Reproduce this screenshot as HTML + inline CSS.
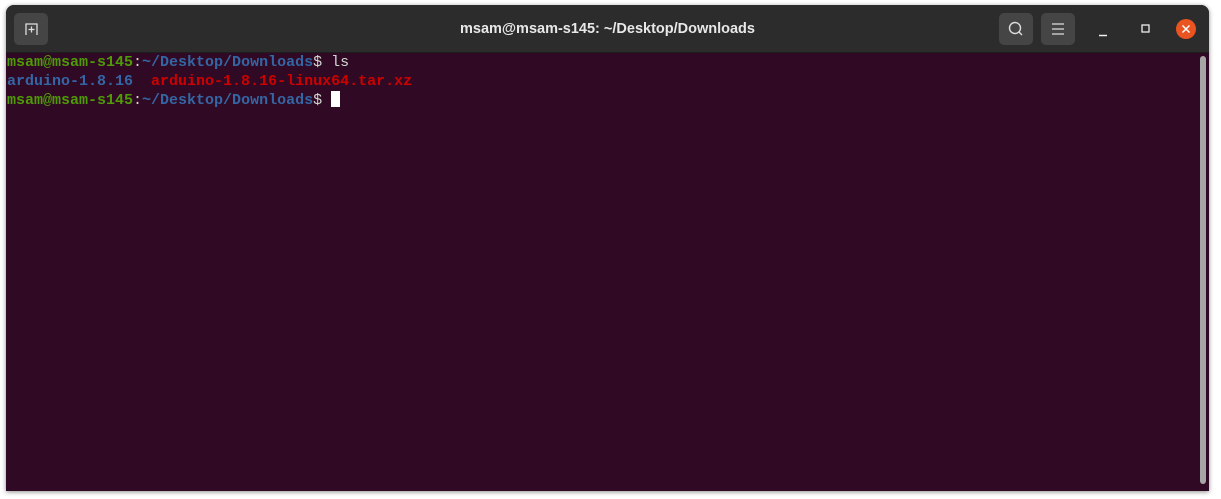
<!DOCTYPE html>
<html><head><style>
html,body{margin:0;padding:0;width:1221px;height:499px;background:#fff;overflow:hidden}
.win{position:absolute;left:6px;top:5px;width:1203px;height:486px;background:#300a24;border-radius:8px 8px 0 0;box-shadow:0 1px 5px rgba(0,0,0,.45);overflow:hidden}
.hdr{position:absolute;left:0;top:0;width:1203px;height:47px;background:#2c2c2c;border-bottom:1px solid #1e1e1e}
.btn{position:absolute;top:8px;width:34px;height:32px;background:#454545;border-radius:5px}
.title{position:absolute;left:0;right:0;top:16px;text-align:center;color:#e8e8e8;font:bold 14.5px "Liberation Sans",sans-serif}
.term{position:absolute;left:1px;top:49px;font:bold 15px/18.5px "Liberation Mono",monospace;white-space:pre;color:#d3d7cf}
.g{color:#4e9a06}.b{color:#3465a4}.r{color:#cc0000}.w{color:#d3d7cf;font-weight:normal}
.cur{display:inline-block;width:9px;height:16px;background:#fff;vertical-align:-3px}
.sb{position:absolute;left:1194px;top:51px;width:6px;height:428px;background:#a6a6a6;border-radius:3px}
</style></head><body>
<div class="win">
<div class="hdr">
<div class="btn" style="left:8px"><svg width="34" height="32"><path d="M12 22V11h11v11" fill="none" stroke="#ddd" stroke-width="1.3"/><path d="M17.5 13.5v6M14.5 16.5h6" stroke="#ddd" stroke-width="1.3"/></svg></div>
<div class="title">msam@msam-s145: ~/Desktop/Downloads</div>
<div class="btn" style="left:993px"><svg width="34" height="32"><circle cx="16" cy="15" r="5.5" fill="none" stroke="#ddd" stroke-width="1.4"/><path d="M20 19l3 3" stroke="#ddd" stroke-width="1.4"/></svg></div>
<div class="btn" style="left:1035px"><svg width="34" height="32"><path d="M11 11h12M11 16h12M11 21h12" stroke="#ddd" stroke-width="1.3"/></svg></div>
<svg style="position:absolute;left:1085px;top:14px" width="120" height="22"><path d="M8 16.5h8" stroke="#eee" stroke-width="1.4"/><rect x="51" y="6" width="7" height="7" fill="none" stroke="#eee" stroke-width="1.3"/><circle cx="95" cy="10" r="10" fill="#e95420"/><path d="M91.5 6.5l7 7M98.5 6.5l-7 7" stroke="#fff" stroke-width="1.5"/></svg>
</div>
<div class="term"><span class="g">msam@msam-s145</span><span class="w">:</span><span class="b">~/Desktop/Downloads</span><span class="w">$ ls</span>
<span class="b">arduino-1.8.16</span>  <span class="r">arduino-1.8.16-linux64.tar.xz</span>
<span class="g">msam@msam-s145</span><span class="w">:</span><span class="b">~/Desktop/Downloads</span><span class="w">$ </span><span class="cur"></span></div>
<div class="sb"></div>
</div>
</body></html>
